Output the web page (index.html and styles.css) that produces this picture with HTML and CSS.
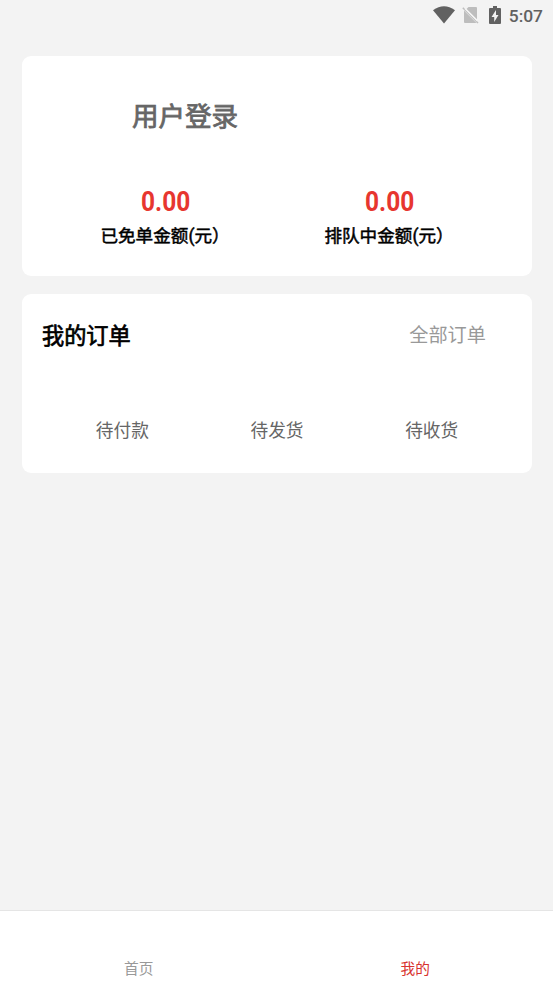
FILE: index.html
```html
<!DOCTYPE html>
<html lang="zh-CN">
<head>
<meta charset="utf-8">
<title>我的</title>
<link rel="stylesheet" href="styles.css">
</head>
<body>
<header class="status">
  <svg class="wifi" width="22" height="18" viewBox="0 0 22 18"><path d="M0 4.3Q11-4 22 4.3L11 17.5Z" fill="#616161"/></svg>
  <svg class="sim" width="17" height="18" viewBox="0 0 17 18"><path d="M6.5 1H14Q15 1 15 2V13.5L4.5 3Z M2 4.5L14.5 17H3Q2 17 2 16Z" fill="#bdbdbd"/><path d="M.8 1.8L16 17" stroke="#bdbdbd" stroke-width="1.5"/><path d="M3 2.4L15.5 14.9" stroke="#f4f4f4" stroke-width="1.4"/></svg>
  <svg class="battery" width="12" height="18" viewBox="0 0 12 18"><path fill-rule="evenodd" d="M4 0H8V2H11Q12 2 12 3V17Q12 18 11 18H1Q0 18 0 17V3Q0 2 1 2H4ZM7 4L2.5 11H5.2V16L9.5 9H7Z" fill="#616161"/></svg>
  <span class="time">5:07</span>
</header>
<main>
  <section class="card account">
    <h1>用户登录</h1>
    <div class="amounts">
      <div class="amount"><strong>0.00</strong><span>已免单金额(元）</span></div>
      <div class="amount"><strong>0.00</strong><span>排队中金额(元）</span></div>
    </div>
  </section>
  <section class="card orders">
    <div class="heading"><h2>我的订单</h2><a>全部订单</a></div>
    <div class="states"><span>待付款</span><span>待发货</span><span>待收货</span></div>
  </section>
</main>
<nav><a>首页</a><a class="active">我的</a></nav>
</body>
</html>
```
FILE: styles.css
```css
* { box-sizing: border-box; }
body { margin: 0; height: 983px; display: flex; flex-direction: column; overflow: hidden; background: #f3f3f3; font-family: Roboto, "Noto Sans CJK SC", sans-serif; }
h1, h2 { margin: 0; font-weight: 400; }
svg { display: block; }
.status { height: 56px; padding: 6px 10px 0 0; display: flex; justify-content: flex-end; align-items: flex-start; }
.sim { margin-left: 7px; }
.battery { margin-left: 10px; }
.time { margin-left: 8px; font-size: 17.4px; line-height: 20px; font-weight: 500; color: #616161; }
main { flex: 1; padding: 0 21px 0 22px; }
.card { background: #fff; border-radius: 9px; }
.account { height: 220px; padding-top: 41px; margin-bottom: 18px; }
h1 { padding-left: 110px; font-size: 26.5px; line-height: 40px; color: #666; -webkit-text-stroke: .8px #666; }
.amounts { display: flex; margin: 49px 31px 0; }
.amount { flex: 1; display: flex; flex-direction: column; align-items: center; }
.amount strong { padding-left: 1px; font-size: 27.5px; line-height: 32px; color: #e7362f; transform: scaleX(.89); }
.amount span { font-size: 17.6px; line-height: 26px; margin-top: 5px; white-space: nowrap; -webkit-text-stroke: .5px #000; }
.orders { height: 179px; padding-top: 26px; }
.heading { display: flex; justify-content: space-between; padding: 0 46px 0 20px; line-height: 32px; }
h2 { font-size: 22.2px; -webkit-text-stroke: .7px #000; }
.heading a { font-size: 19.2px; color: #999; }
.states { display: flex; margin: 66px 23px 0; }
.states span { flex: 1; text-align: center; font-size: 17.7px; line-height: 26px; color: #666; }
nav { height: 73px; display: flex; background: #fff; border-top: 1px solid #e5e5e5; padding-top: 47px; }
nav a { flex: 1; padding-left: 1px; text-align: center; font-size: 14.7px; line-height: 22px; color: #999; }
nav .active { color: #d8332f; }
```
